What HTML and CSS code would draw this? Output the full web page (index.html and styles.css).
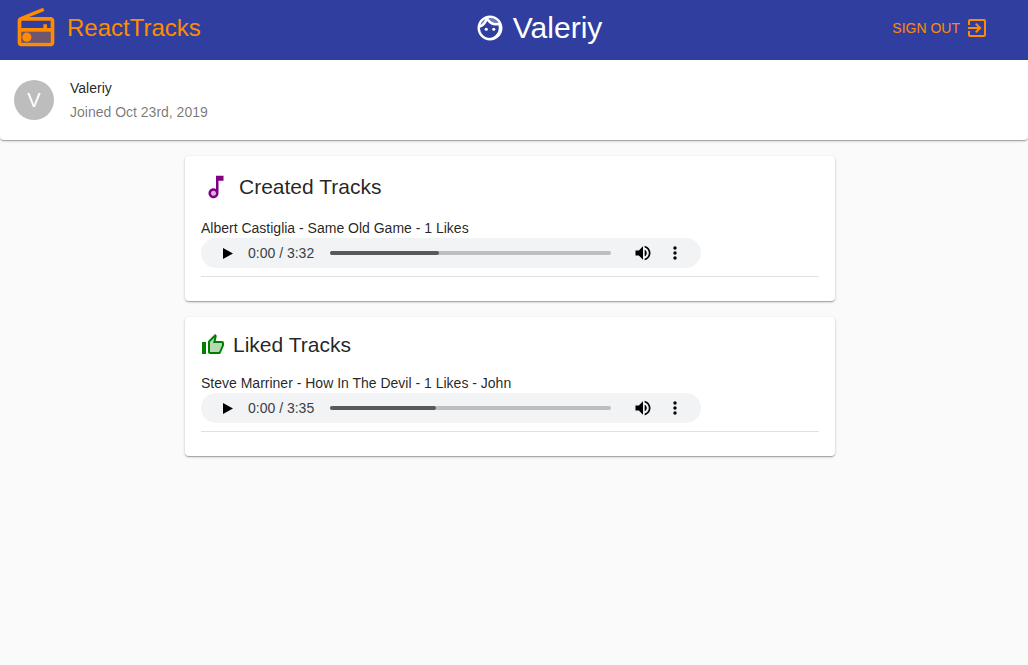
FILE: index.html
```html
<!DOCTYPE html>
<html lang="en">
<head>
  <meta charset="UTF-8" />
  <title>ReactTracks</title>
  <link rel="stylesheet" href="styles.css">
</head>
<body>

  <header class="appbar">
    <div class="brand">
      <svg class="icon-radio" viewBox="0 0 24 24">
        <path opacity=".3" d="M4 14h16v6H4z"/>
        <path d="M3.24 6.15C2.51 6.43 2 7.17 2 8v12c0 1.1.89 2 2 2h16c1.11 0 2-.9 2-2V8c0-1.11-.89-2-2-2H8.3l8.26-3.34L15.88 1 3.24 6.15zM20 8v4h-2v-2h-2v2H4V8h16zm0 12H4v-6h16v6z"/>
        <circle cx="7" cy="17" r="2.5"/>
      </svg>
      <span class="brand-name">ReactTracks</span>
    </div>
    <div class="current-user">
      <svg class="icon-face" viewBox="0 0 24 24">
        <path opacity=".3" d="M17.5 8c.46 0 .91-.05 1.34-.12C17.44 5.56 14.9 4 12 4c-.46 0-.91.05-1.34.12C12.06 6.44 14.6 8 17.5 8zM8.08 5.03C6.37 6 5.05 7.58 4.42 9.47c1.71-.97 3.03-2.55 3.66-4.44z"/>
        <path d="M12 2C6.48 2 2 6.48 2 12s4.48 10 10 10 10-4.48 10-10S17.52 2 12 2zm0 2c2.9 0 5.44 1.56 6.84 3.88-.43.07-.88.12-1.34.12-2.9 0-5.44-1.56-6.84-3.88.43-.07.88-.12 1.34-.12zM8.08 5.03C7.45 6.92 6.13 8.5 4.42 9.47 5.05 7.58 6.37 6 8.08 5.03zM12 20c-4.41 0-8-3.59-8-8 0-.05.01-.1.01-.15 2.6-.98 4.68-2.99 5.74-5.55C11.13 8.46 13.63 10 16.5 10c.75 0 1.47-.09 2.17-.24.21.71.33 1.46.33 2.24 0 4.41-3.59 8-8 8z"/>
        <circle cx="9" cy="13" r="1.25"/>
        <circle cx="15" cy="13" r="1.25"/>
      </svg>
      <span class="current-user-name">Valeriy</span>
    </div>
    <button class="signout">
      <span>Sign out</span>
      <svg class="icon-exit" viewBox="0 0 24 24">
        <path d="M10.09 15.59L11.5 17l5-5-5-5-1.41 1.41L12.67 11H3v2h9.67l-2.58 2.59zM19 3H5c-1.11 0-2 .9-2 2v4h2V5h14v14H5v-4H3v4c0 1.1.89 2 2 2h14c1.1 0 2-.9 2-2V5c0-1.1-.9-2-2-2z"/>
      </svg>
    </button>
  </header>

  <section class="profile">
    <div class="avatar">V</div>
    <div class="profile-text">
      <div class="profile-name">Valeriy</div>
      <div class="profile-joined">Joined Oct 23rd, 2019</div>
    </div>
  </section>

  <main class="content">
    <section class="card">
      <h2 class="card-title">
        <svg class="icon-track" viewBox="0 0 24 24">
          <circle opacity=".3" cx="10" cy="17" r="2"/>
          <path d="M12 3l.01 10.55c-.59-.34-1.27-.55-2-.55C7.79 13 6 14.79 6 17s1.79 4 4.01 4S14 19.21 14 17V7h4V3h-6zm-1.99 16c-1.1 0-2-.9-2-2s.9-2 2-2 2 .9 2 2-.9 2-2 2z"/>
        </svg>
        Created Tracks
      </h2>
      <div class="track">
        <div class="track-label">Albert Castiglia - Same Old Game - 1 Likes</div>
        <div class="player">
          <svg class="player-play" viewBox="0 0 10 11"><path d="M0 0l10 5.5L0 11z"/></svg>
          <span class="player-time">0:00 / 3:32</span>
          <div class="player-bar"><div class="player-bar-fill" style="width: 38.7%"></div></div>
          <svg class="player-volume" viewBox="0 0 24 24"><path d="M3 9v6h4l5 5V4L7 9H3zm13.5 3c0-1.77-1.02-3.29-2.5-4.03v8.05c1.48-.73 2.5-2.25 2.5-4.02zM14 3.23v2.06c2.89.86 5 3.54 5 6.71s-2.11 5.85-5 6.71v2.06c4.01-.91 7-4.49 7-8.77s-2.99-7.86-7-8.77z"/></svg>
          <svg class="player-menu" viewBox="0 0 4 14"><circle cx="2" cy="2" r="1.7"/><circle cx="2" cy="7" r="1.7"/><circle cx="2" cy="12" r="1.7"/></svg>
        </div>
      </div>
    </section>

    <section class="card">
      <h2 class="card-title card-title-liked">
        <svg class="icon-thumb" viewBox="0 0 24 24">
          <path opacity=".3" d="M9 19h9l3-7v-2h-9l1.34-5.34L9 9z"/>
          <path d="M9 21h9c.83 0 1.54-.5 1.84-1.22l3.02-7.05c.09-.23.14-.47.14-.73v-2c0-1.1-.9-2-2-2h-6.31l.95-4.57.03-.32c0-.41-.17-.79-.44-1.06L14.17 1 7.58 7.59C7.22 7.95 7 8.45 7 9v10c0 1.1.9 2 2 2zM9 9l4.34-4.34L12 10h9v2l-3 7H9V9zM1 9h4v12H1z"/>
        </svg>
        Liked Tracks
      </h2>
      <div class="track">
        <div class="track-label">Steve Marriner - How In The Devil - 1 Likes - John</div>
        <div class="player">
          <svg class="player-play" viewBox="0 0 10 11"><path d="M0 0l10 5.5L0 11z"/></svg>
          <span class="player-time">0:00 / 3:35</span>
          <div class="player-bar"><div class="player-bar-fill" style="width: 37.6%"></div></div>
          <svg class="player-volume" viewBox="0 0 24 24"><path d="M3 9v6h4l5 5V4L7 9H3zm13.5 3c0-1.77-1.02-3.29-2.5-4.03v8.05c1.48-.73 2.5-2.25 2.5-4.02zM14 3.23v2.06c2.89.86 5 3.54 5 6.71s-2.11 5.85-5 6.71v2.06c4.01-.91 7-4.49 7-8.77s-2.99-7.86-7-8.77z"/></svg>
          <svg class="player-menu" viewBox="0 0 4 14"><circle cx="2" cy="2" r="1.7"/><circle cx="2" cy="7" r="1.7"/><circle cx="2" cy="12" r="1.7"/></svg>
        </div>
      </div>
    </section>
  </main>

</body>
</html>
```

FILE: styles.css
```css
* {
  box-sizing: border-box;
}
body {
  margin: 0;
  min-height: 665px;
  background-color: #fafafa;
  color: rgba(0, 0, 0, 0.87);
  font-family: "Liberation Sans", Arial, sans-serif;
  font-size: 14px;
}

/* top bar */
.appbar {
  display: flex;
  align-items: center;
  justify-content: space-between;
  height: 60px;
  padding: 0 23px 4px 14px;
  background-color: #303f9f;
}
.brand {
  display: flex;
  align-items: center;
  color: #ff8c00;
}
.icon-radio {
  width: 44px;
  height: 44px;
  margin-right: 9px;
  fill: #ff8c00;
}
.brand-name {
  font-size: 24px;
}
.current-user {
  display: flex;
  align-items: center;
  color: #fff;
}
.icon-face {
  width: 30px;
  height: 30px;
  margin-right: 8px;
  fill: #fff;
}
.current-user-name {
  font-size: 30px;
}
.signout {
  display: flex;
  align-items: center;
  padding: 8px 16px;
  border: 0;
  background: none;
  color: #ff8c00;
  font-family: inherit;
  font-size: 14px;
  text-transform: uppercase;
}
.icon-exit {
  width: 24px;
  height: 24px;
  margin-left: 5px;
  fill: #ff8c00;
}

/* profile strip */
.profile {
  display: flex;
  align-items: center;
  height: 80px;
  padding-left: 14px;
  background-color: #fff;
  border-radius: 0 0 4px 4px;
  box-shadow: 0 1px 3px rgba(0, 0, 0, 0.2), 0 1px 1px rgba(0, 0, 0, 0.14), 0 2px 1px -1px rgba(0, 0, 0, 0.12);
}
.avatar {
  display: flex;
  align-items: center;
  justify-content: center;
  width: 40px;
  height: 40px;
  border-radius: 50%;
  background-color: #bdbdbd;
  color: #fff;
  font-size: 20px;
}
.profile-text {
  margin-left: 16px;
}
.profile-name {
  line-height: 20px;
  margin-bottom: 4px;
}
.profile-joined {
  line-height: 20px;
  color: rgba(0, 0, 0, 0.54);
}

/* track cards */
.content {
  display: flex;
  flex-direction: column;
  gap: 16px;
  width: 650px;
  margin: 16px 0 0 185px;
}
.card {
  padding: 16px 16px 24px;
  background-color: #fff;
  border-radius: 4px;
  box-shadow: 0 1px 3px rgba(0, 0, 0, 0.2), 0 1px 1px rgba(0, 0, 0, 0.14), 0 2px 1px -1px rgba(0, 0, 0, 0.12);
}
.card-title {
  display: flex;
  align-items: center;
  height: 30px;
  margin: 0 0 16px;
  font-size: 21px;
  font-weight: 400;
}
.card-title-liked {
  height: 24px;
}
.icon-track {
  width: 30px;
  height: 30px;
  margin-right: 8px;
  fill: #800080;
}
.icon-thumb {
  width: 24px;
  height: 24px;
  margin-right: 8px;
  fill: #008000;
}
.track {
  padding-bottom: 8px;
  border-bottom: 1px solid #e0e0e0;
}
.track-label {
  line-height: 20px;
}

/* drawn audio controls */
.player {
  display: flex;
  align-items: center;
  width: 500px;
  height: 30px;
  padding-left: 22px;
  background-color: #f1f3f4;
  border-radius: 15px;
}
.player-play {
  width: 10px;
  height: 11px;
  fill: #000;
}
.player-time {
  width: 66px;
  margin-left: 15px;
  color: #3c4043;
  white-space: nowrap;
}
.player-bar {
  width: 281px;
  height: 4px;
  margin-left: 16px;
  background-color: #bdbebf;
  border-radius: 2px;
}
.player-bar-fill {
  height: 100%;
  background-color: #595959;
  border-radius: 2px;
}
.player-volume {
  width: 20px;
  height: 20px;
  margin-left: 22px;
  fill: #000;
}
.player-menu {
  width: 4px;
  height: 14px;
  margin-left: 20px;
  fill: #000;
}
```
